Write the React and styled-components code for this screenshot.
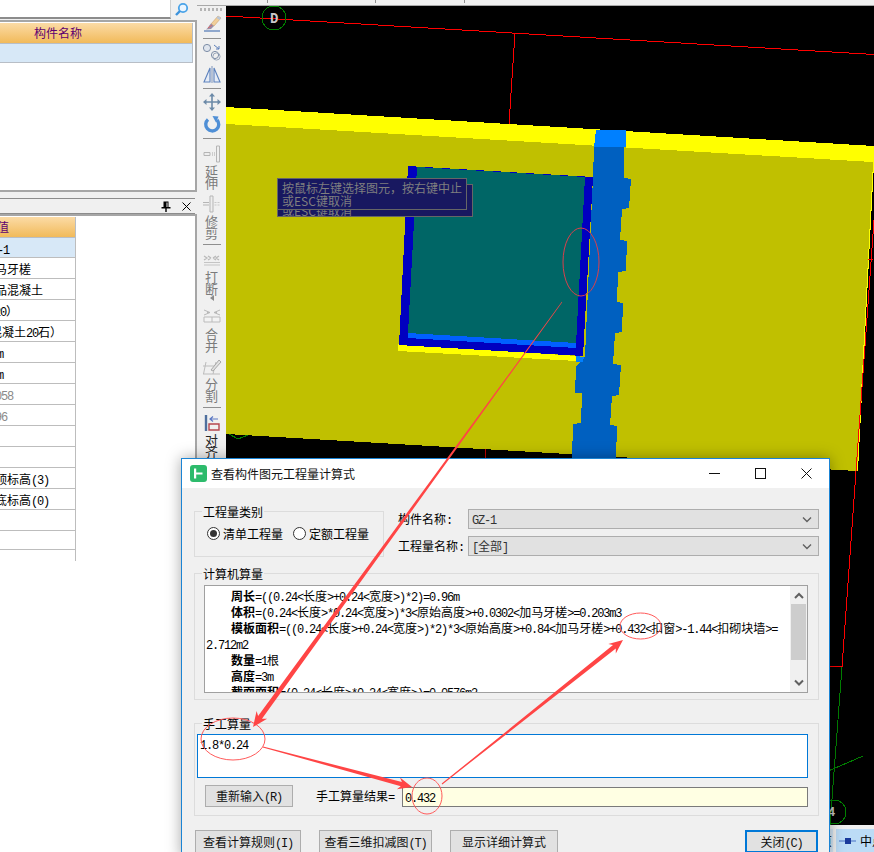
import React from "react";
import styled, { createGlobalStyle } from "styled-components";

const GlobalStyle = createGlobalStyle`
  html, body { margin: 0; padding: 0; background: #f0f0f0; overflow: hidden; }
  * { box-sizing: border-box; }
`;

const Page = styled.div`
  position: relative;
  width: 874px;
  height: 852px;
  overflow: hidden;
  display: flex;
  font-family: "Noto Sans CJK SC", "Liberation Sans", sans-serif;
  font-size: 12px;
  color: #000;
`;

const Lat = styled.span`
  font-family: "Liberation Mono", monospace;
  font-size: 12px;
  letter-spacing: -1.2px;
  white-space: pre;
`;

// SimSun style text: ascii is half the width of a CJK glyph
const Mixed = ({ children }) =>
  String(children)
    .split(/([\x20-\x7e]+)/)
    .map((part, i) => (i % 2 ? <Lat key={i}>{part}</Lat> : part));

/* left side panels */
const LeftPanel = styled.aside`
  width: 197px;
  flex: none;
  display: flex;
  flex-direction: column;
  background: #f0f0f0;
`;

const SearchBar = styled.div`
  height: 20px;
  flex: none;
  display: flex;
`;

const SearchInput = styled.div`
  width: 171px;
  height: 19px;
  background: #fff;
  border-bottom: 2px solid #8c8c8c;
  border-right: 1px solid #d0d0d0;
`;

const SearchButton = styled.div`
  width: 20px;
  height: 19px;
  display: flex;
  align-items: center;
  justify-content: center;
`;

const TreePanel = styled.div`
  height: 172px;
  flex: none;
  padding-top: 1px;
  background: #fff;
  border-top: 2px solid #a6a6a6;
  border-right: 2px solid #a6a6a6;
  border-bottom: 2px solid #a6a6a6;
`;

const HeaderCell = styled.div`
  height: 21px;
  width: ${(p) => p.$width}px;
  padding-left: ${(p) => p.$pad || 0}px;
  line-height: 20px;
  color: #5e0070;
  white-space: nowrap;
  overflow: hidden;
  background: linear-gradient(#fbdba6, #f1ba5a);
  border-right: 1px solid #b8bec6;
  border-bottom: 1px solid #b8bec6;
`;

const SelectedCell = styled.div`
  height: 19px;
  width: 193px;
  background: #d7e8f7;
  border-right: 1px solid #b8bec6;
  border-bottom: 1px solid #b8bec6;
`;

const PanelTitle = styled.div`
  height: 16px;
  width: 195px;
  flex: none;
  margin-top: 6px;
  display: flex;
  align-items: center;
  justify-content: flex-end;
  gap: 11px;
  padding-right: 4px;
  border-top: 1px solid #8c8c8c;
  border-bottom: 1px solid #8c8c8c;
`;

const PropPanel = styled.div`
  flex: 1;
  margin-top: 0;
  padding-top: 1px;
  background: #fff;
  border-top: 2px solid #a6a6a6;
  border-right: 2px solid #a6a6a6;
`;

const PropRow = styled.div`
  height: ${(p) => p.$height || 21}px;
  width: 76px;
  line-height: 21px;
  overflow: hidden;
  white-space: nowrap;
  color: ${(p) => (p.$muted ? "#8a8a8a" : "#000")};
  background: ${(p) => (p.$selected ? "#d7e8f7" : "#fff")};
  border-right: 1px solid #bdbdbd;
  border-bottom: ${(p) => (p.$open ? "none" : "1px solid #bdbdbd")};
`;

const Shifted = styled.span`
  display: inline-block;
  margin-left: ${(p) => p.$shift}px;
`;

/* right side: toolbar and drawing */
const RightArea = styled.div`
  flex: 1;
  display: flex;
  flex-direction: column;
  min-width: 0;
`;

const Ruler = styled.div`
  height: 6px;
  flex: none;
  display: flex;
  background: #f0f0f0;
  border-bottom: 1px solid #a8a8a8;
`;

const RulerTick = styled.i`
  width: 1px;
  height: 3px;
  margin-left: ${(p) => p.$left}px;
  background: #909090;
`;

const Main = styled.div`
  flex: 1;
  display: flex;
  min-height: 0;
`;

const Toolbar = styled.div`
  width: 29px;
  flex: none;
  display: flex;
  flex-direction: column;
  align-items: center;
  background: #f0f0f0;
`;

const Grip = styled.div`
  width: 24px;
  height: 3px;
  margin-top: 2px;
  background: repeating-linear-gradient(90deg, #b4b4b4 0 2px, transparent 2px 4px);
`;

const ToolSep = styled.div`
  width: 18px;
  height: 1px;
  flex: none;
  margin-top: ${(p) => p.$top}px;
  background: #8f8f8f;
`;

const ToolSlot = styled.div`
  height: 22px;
  width: 22px;
  flex: none;
  margin-top: ${(p) => p.$top || 0}px;
  display: flex;
  align-items: center;
  justify-content: center;
`;

const ToolLabel = styled.div`
  width: 14px;
  margin-top: ${(p) => p.$top || 0}px;
  font-size: 13px;
  line-height: 11.5px;
  text-align: center;
  color: ${(p) => (p.$on ? "#222" : "#7b7b7b")};
`;

const DropMark = styled.div`
  width: 0;
  height: 0;
  margin-top: 1px;
  border-top: 3px solid transparent;
  border-bottom: 3px solid transparent;
  border-right: 4px solid #8a8a8a;
`;

const CanvasColumn = styled.div`
  flex: 1;
  display: flex;
  flex-direction: column;
  min-width: 0;
  background: #000;
`;

const Drawing = styled.svg`
  display: block;
  flex: none;
  width: 648px;
  height: 819px;
  background: #000;
`;

const StatusBar = styled.div`
  flex: 1;
  display: flex;
  justify-content: flex-end;
  gap: 3px;
  padding-top: 4px;
  overflow: hidden;
  background: #f0f0f0;
`;

const StatusTab = styled.div`
  width: ${(p) => p.$width}px;
  height: 23px;
  line-height: 23px;
  white-space: nowrap;
  overflow: hidden;
  display: flex;
  align-items: center;
  gap: 4px;
  padding-left: ${(p) => p.$pad || 0}px;
  background: ${(p) => (p.$active ? "#bcdcf6" : "#d4e6f5")};
`;

/* tooltip on the drawing */
const Tooltip = styled.div`
  position: absolute;
  left: ${(p) => p.$left}px;
  top: ${(p) => p.$top}px;
  width: ${(p) => p.$width}px;
  height: ${(p) => p.$height}px;
  overflow: hidden;
  padding: ${(p) => p.$pad}px 0 0 4px;
  line-height: 13px;
  color: #7f7f7f;
  background: #181860;
  border: 1px solid #666;
`;

/* dialog */
const Dialog = styled.div`
  position: absolute;
  left: 181px;
  top: 458px;
  width: 649px;
  height: 400px;
  display: flex;
  flex-direction: column;
  background: #f0f0f0;
  border: 1px solid #1b84d4;
  box-shadow: 0 0 14px rgba(0, 0, 0, 0.35);
`;

const TitleBar = styled.div`
  height: 29px;
  flex: none;
  display: flex;
  align-items: center;
  padding-left: 8px;
  background: #fff;
`;

const TitleText = styled.div`
  margin-left: 4px;
  flex: 1;
  font-size: 12px;
  color: #111;
`;

const WindowButton = styled.div`
  width: 46px;
  height: 29px;
  display: flex;
  align-items: center;
  justify-content: center;
`;

const DialogBody = styled.div`
  flex: 1;
  display: flex;
  flex-direction: column;
  padding: 23px 10px 0 12px;
`;

const TopRow = styled.div`
  height: 47px;
  display: flex;
`;

const Group = styled.div`
  position: relative;
  width: ${(p) => p.$width || 625}px;
  height: ${(p) => p.$height}px;
  margin-top: ${(p) => p.$top || 0}px;
  border: 1px solid #dcdcdc;
`;

const GroupLabel = styled.div`
  position: absolute;
  left: 7px;
  top: -7px;
  padding: 0 1px;
  line-height: 13px;
  background: #f0f0f0;
`;

const RadioRow = styled.div`
  display: flex;
  align-items: center;
  height: 100%;
  padding: 0 0 1px 12px;
  gap: 10px;
`;

const RadioItem = styled.label`
  display: flex;
  align-items: center;
  gap: 3px;
`;

const RadioMark = styled.span`
  width: 13px;
  height: 13px;
  border-radius: 50%;
  border: 1px solid #333;
  background: #fff;
  display: flex;
  align-items: center;
  justify-content: center;
  &::after {
    content: "";
    width: 7px;
    height: 7px;
    border-radius: 50%;
    background: ${(p) => (p.$on ? "#333" : "transparent")};
  }
`;

const FieldColumn = styled.div`
  margin-left: 14px;
  margin-top: -2px;
  flex: 1;
  display: flex;
  flex-direction: column;
  gap: 7px;
`;

const Field = styled.div`
  display: flex;
  align-items: center;
  height: 20px;
`;

const FieldLabel = styled.div`
  width: 70px;
  flex: none;
`;

const Select = styled.div`
  flex: 1;
  height: 20px;
  display: flex;
  align-items: center;
  justify-content: space-between;
  padding: 0 6px 0 3px;
  background: #e1e1e1;
  border: 1px solid #adadad;
  color: #333;
`;

const FormulaBox = styled.div`
  position: absolute;
  left: 9px;
  top: 11px;
  width: 604px;
  height: 108px;
  background: #fff;
  border: 1px solid #a0a0a0;
  overflow: hidden;
  padding-top: 2px;
`;

const FormulaLine = styled.div`
  height: 16px;
  line-height: 16px;
  white-space: pre;
  padding-left: ${(p) => (p.$wrapped ? 1 : 26)}px;
`;

const FormulaKey = styled.b`
  font-weight: 700;
`;

const ScrollTrack = styled.div`
  position: absolute;
  top: 0;
  right: 0;
  width: 17px;
  height: 106px;
  display: flex;
  flex-direction: column;
  align-items: center;
  justify-content: space-between;
  padding: 6px 0;
  background: #f0f0f0;
`;

const ScrollThumb = styled.div`
  position: absolute;
  left: 1px;
  top: 18px;
  width: 15px;
  height: 56px;
  background: #cdcdcd;
`;

const ManualInput = styled.div`
  position: absolute;
  left: 2px;
  top: 10px;
  width: 611px;
  height: 44px;
  padding: 2px 2px;
  line-height: 14px;
  background: #fff;
  border: 1px solid #0078d7;
`;

const ManualRow = styled.div`
  position: absolute;
  left: 10px;
  top: 61px;
  right: 10px;
  height: 22px;
  display: flex;
  align-items: center;
`;

const Button = styled.button`
  width: ${(p) => p.$width}px;
  height: ${(p) => p.$height || 23}px;
  flex: none;
  margin: 0;
  padding: 0;
  font: inherit;
  color: #111;
  background: #e1e1e1;
  border: ${(p) => (p.$primary ? "2px solid #0078d7" : "1px solid #adadad")};
`;

const ResultLabel = styled.div`
  margin-left: 23px;
  width: 86px;
  flex: none;
`;

const ResultValue = styled.div`
  flex: 1;
  height: 20px;
  margin-top: 2px;
  line-height: 18px;
  padding-left: 2px;
  background: #ffffe3;
  border: 1px solid #7a7a7a;
`;

const BottomRow = styled.div`
  display: flex;
  gap: 18px;
  margin-top: 14px;
  margin-left: 1px;
  padding-right: 1px;
`;

const Spacer = styled.div`
  flex: 1;
`;

const Annotations = styled.svg`
  position: absolute;
  left: 0;
  top: 0;
  width: 874px;
  height: 852px;
  pointer-events: none;
`;

/* tapered hand drawn arrow, as it is in the picture */
const arrowPoints = (x1, y1, x2, y2, w0, w1, headLen, headHalf) => {
  const len = Math.hypot(x2 - x1, y2 - y1);
  const dx = (x2 - x1) / len;
  const dy = (y2 - y1) / len;
  const nx = -dy;
  const ny = dx;
  const bx = x2 - dx * headLen;
  const by = y2 - dy * headLen;
  const neckX = x2 - dx * (headLen - 3);
  const neckY = y2 - dy * (headLen - 3);
  return [
    [x1 + nx * w0, y1 + ny * w0],
    [neckX + nx * w1, neckY + ny * w1],
    [bx + nx * headHalf, by + ny * headHalf],
    [x2, y2],
    [bx - nx * headHalf, by - ny * headHalf],
    [neckX - nx * w1, neckY - ny * w1],
    [x1 - nx * w0, y1 - ny * w0],
  ]
    .map((p) => p.map((v) => v.toFixed(1)).join(","))
    .join(" ");
};

const Chevron = ({ up, size = 10, color = "#606060", width = 1.4 }) => (
  <svg width={size} height={size * 0.7} viewBox="0 0 10 7">
    <path
      d={up ? "M1 6 L5 2 L9 6" : "M1 1.5 L5 5.5 L9 1.5"}
      fill="none"
      stroke={color}
      strokeWidth={width}
    />
  </svg>
);

const icons = {
  brush: (
    <svg width="20" height="20" viewBox="0 0 20 20">
      <path d="M9 11 L16 3 L19 5 L12 13 Z" fill="#f1cf9a" stroke="#c9a06a" strokeWidth=".6" />
      <path d="M16 3 L19 5 L17.5 7 L14.5 5 Z" fill="#b9c6d8" />
      <path d="M9 10.5 L12 13 L9 16 L4 16.5 C6 15 7 12.5 9 10.5 Z" fill="#9a90a8" />
      <path d="M6 15 L10 12" stroke="#d66" strokeWidth="1" />
      <path d="M2 18 H18" stroke="#4f77b4" strokeWidth="1.2" />
    </svg>
  ),
  circles: (
    <svg width="20" height="20" viewBox="0 0 20 20">
      <circle cx="5" cy="6" r="3.6" fill="#dfe5ee" stroke="#7d8da6" />
      <circle cx="13" cy="13" r="3.6" fill="none" stroke="#7d8da6" />
      <circle cx="14.5" cy="14.5" r="3.6" fill="none" stroke="#9aa7ba" />
      <path d="M12 3 L17 7 M17 4 V7 H14" fill="none" stroke="#5c7fb8" strokeWidth="1" />
    </svg>
  ),
  mirror: (
    <svg width="20" height="20" viewBox="0 0 20 20">
      <path d="M8 3 V17 H2 Z M12 3 V17 H18 Z" fill="#e6ecf6" stroke="#5d82bd" strokeWidth="1.1" />
      <path d="M10 1 V18" stroke="#7c93ba" strokeWidth="1" />
    </svg>
  ),
  move: (
    <svg width="20" height="20" viewBox="0 0 20 20" fill="#6c8aa8">
      <path d="M9.2 4 H10.8 V9.2 H16 V10.8 H10.8 V16 H9.2 V10.8 H4 V9.2 H9.2 Z" />
      <path d="M10 1 L13 4.5 H7 Z M10 19 L7 15.5 H13 Z M1 10 L4.5 7 V13 Z M19 10 L15.5 13 V7 Z" />
    </svg>
  ),
  rotate: (
    <svg width="20" height="20" viewBox="0 0 20 20">
      <path d="M6 5.5 A6.5 6.5 0 1 0 15 6" fill="none" stroke="#4f8fd6" strokeWidth="3.4" />
      <path d="M10.5 2 L16.5 2.5 L14 8.5 Z" fill="#4f8fd6" />
    </svg>
  ),
  extend: (
    <svg width="20" height="18" viewBox="0 0 20 18">
      <path d="M14.5 1 H17.5 V17 H14.5 Z" fill="#eee" stroke="#b5b5b5" />
      <path d="M2 7.5 H8 V10.5 H2 Z" fill="#eee" stroke="#b5b5b5" />
      <path d="M10 8 H13 M10 10 H13" stroke="#a8a8a8" strokeDasharray="1 1" />
    </svg>
  ),
  trim: (
    <svg width="20" height="18" viewBox="0 0 20 18">
      <path d="M8 1 H11 V17 H8 Z" fill="#eee" stroke="#b5b5b5" />
      <path d="M1 7.5 H7 M1 10 H7" stroke="#b5b5b5" />
      <path d="M12.5 7.5 H18 M12.5 10 H18" stroke="#c8c8c8" strokeDasharray="2 1" />
    </svg>
  ),
  split: (
    <svg width="20" height="14" viewBox="0 0 20 14">
      <path d="M2 4 L5 6 L2 8 M9 6 L6 4 M9 6 L6 8" fill="none" stroke="#b8b8b8" strokeWidth="1.2" />
      <path d="M17 4 L14 6 L17 8 M11 6 L14 4 M11 6 L14 8" fill="none" stroke="#b8b8b8" strokeWidth="1.2" />
      <path d="M2 10.5 H18 M2 13 H18" stroke="#c4c4c4" />
    </svg>
  ),
  merge: (
    <svg width="20" height="14" viewBox="0 0 20 14">
      <path d="M2 1 L8 3.5 L2 6 M5 3.5 H8 M18 1 L12 3.5 L18 6 M12 3.5 H15" fill="none" stroke="#b8b8b8" />
      <path d="M2 8 H18 V13 H2 Z M10 8 V13" fill="#f3f3f3" stroke="#bbb" />
    </svg>
  ),
  cut: (
    <svg width="20" height="18" viewBox="0 0 20 18">
      <path d="M1 8 H15 M1 16 H18 M4 4 L1.5 16 M14 4 L11 16" fill="none" stroke="#bcbcbc" />
      <path d="M9 12 L17 2 L19 4 L11 13 Z" fill="#e2e2e2" stroke="#a8a8a8" />
    </svg>
  ),
  align: (
    <svg width="20" height="18" viewBox="0 0 20 18">
      <path d="M4 1 V17" stroke="#4f6f9d" strokeWidth="2.4" />
      <path d="M7 10 H17 V16 H7 Z" fill="none" stroke="#b5474f" strokeWidth="1.4" />
      <path d="M16 5 H8 M11 2.5 L8 5 L11 7.5" fill="none" stroke="#5c78c4" strokeWidth="1.2" />
    </svg>
  ),
};

const Tool = ({ icon, label, top, labelTop, on }) => (
  <>
    <ToolSlot $top={top}>{icons[icon]}</ToolSlot>
    {label && (
      <ToolLabel $top={labelTop} $on={on}>
        {label}
      </ToolLabel>
    )}
  </>
);

const propRows = [
  { text: "GZ-1", shift: -15, selected: true, height: 20 },
  { text: "加马牙槎", shift: -17 },
  { text: "商品混凝土", shift: -17 },
  { text: "（C20）", shift: -24 },
  { text: "（混凝土20石）", shift: -22 },
  { text: "240mm", shift: -27 },
  { text: "240mm", shift: -27 },
  { text: "0.058", shift: -17, muted: true },
  { text: "0.96", shift: -17, muted: true },
  {},
  {},
  { text: "层顶标高(3)", shift: -17 },
  { text: "层底标高(0)", shift: -17 },
  {},
  { height: 19 },
  { height: 11, open: true },
];

const formula = [
  ["周长", "=((0.24<长度>+0.24<宽度>)*2)=0.96m"],
  ["体积", "=(0.24<长度>*0.24<宽度>)*3<原始高度>+0.0302<加马牙槎>=0.203m3"],
  ["模板面积", "=((0.24<长度>+0.24<宽度>)*2)*3<原始高度>+0.84<加马牙槎>+0.432<扣窗>-1.44<扣砌块墙>="],
  [null, "2.712m2"],
  ["数量", "=1根"],
  ["高度", "=3m"],
  ["截面面积", "=(0.24<长度>*0.24<宽度>)=0.0576m2"],
];

const App = () => {
  return (
    <Page>
      <GlobalStyle />
      <LeftPanel>
        <SearchBar>
          <SearchInput />
          <SearchButton>
            <svg width="15" height="15" viewBox="0 0 15 15">
              <circle cx="9" cy="6" r="4.2" fill="#eaf5ff" stroke="#4aa3e8" strokeWidth="1.8" />
              <path d="M6 9 L2 13" stroke="#3d93dc" strokeWidth="2.4" />
            </svg>
          </SearchButton>
        </SearchBar>
        <TreePanel>
          <HeaderCell $width={193} $pad={34}>
            构件名称
          </HeaderCell>
          <SelectedCell />
        </TreePanel>
        <PanelTitle>
          <svg width="10" height="11" viewBox="0 0 10 11">
            <path d="M2.5 0.5 H7.5 V6 H9.5 V7.5 H5.7 V11 H4.3 V7.5 H0.5 V6 H2.5 Z M5.5 1.5 V6 H6.5 V1.5 Z" fill="#000" />
          </svg>
          <svg width="9" height="9" viewBox="0 0 9 9">
            <path d="M.5 .5 L8.5 8.5 M8.5 .5 L.5 8.5" stroke="#000" strokeWidth="1" />
          </svg>
        </PanelTitle>
        <PropPanel>
          <HeaderCell $width={76}>
            <Shifted $shift={-27}>属性值</Shifted>
          </HeaderCell>
          {propRows.map((row, i) => (
            <PropRow key={i} $selected={row.selected} $muted={row.muted} $height={row.height} $open={row.open}>
              {row.text && (
                <Shifted $shift={row.shift}>
                  <Mixed>{row.text}</Mixed>
                </Shifted>
              )}
            </PropRow>
          ))}
        </PropPanel>
      </LeftPanel>

      <RightArea>
        <Ruler>
          <RulerTick $left={70} />
          <RulerTick $left={107} />
          <RulerTick $left={88} />
        </Ruler>
        <Main>
          <Toolbar>
            <Grip />
            <Tool icon="brush" top={1} />
            <ToolSep $top={4} />
            <Tool icon="circles" top={2} />
            <Tool icon="mirror" top={1} />
            <ToolSep $top={2} />
            <Tool icon="move" top={2} />
            <Tool icon="rotate" />
            <ToolSep $top={3} />
            <Tool icon="extend" top={4} label="延伸" />
            <Tool icon="trim" top={5} label="修剪" />
            <ToolSep $top={6} />
            <Tool icon="split" top={3} label="打断" labelTop={1} />
            <DropMark />
            <Tool icon="merge" top={4} label="合并" labelTop={1} />
            <Tool icon="cut" top={5} label="分割" />
            <ToolSep $top={6} />
            <Tool icon="align" top={4} label="对齐" on />
          </Toolbar>
          <CanvasColumn>
            <Drawing viewBox="226 6 648 819" shapeRendering="crispEdges">
              <line x1="226" y1="16" x2="874" y2="54.5" stroke="#f00" />
              <line x1="515" y1="33" x2="509" y2="124" stroke="#f00" />
              <polygon points="226,107 874,146 874,163 858,471 857,471 873,162 226,124" fill="#ff0" />
              <polygon points="226,124 873,162 857,471 226,434" fill="#c0c000" />
              <polyline points="229,434 238,439 248,435" fill="none" stroke="#008000" />
              <line x1="485" y1="449" x2="485" y2="458" stroke="#c00000" />
              <line x1="874" y1="220" x2="842" y2="667" stroke="#f00" />
              <line x1="868" y1="259" x2="873" y2="259" stroke="#f00" />
              <line x1="826" y1="666" x2="842" y2="666" stroke="#f00" />
              <line x1="842" y1="667" x2="830" y2="825" stroke="#008000" />
              <line x1="826" y1="772" x2="863" y2="756" stroke="#008000" />
              <circle cx="834" cy="812" r="12" fill="none" stroke="#008000" />
              <text x="828" y="816" fontFamily="Liberation Mono" fontSize="12" fontWeight="700" fill="#c8c8c8">
                4
              </text>
              <circle cx="274" cy="18" r="12" fill="none" stroke="#008000" />
              <text x="270" y="23" fontFamily="Liberation Mono" fontSize="14" fontWeight="700" fill="#c8c8c8">
                D
              </text>

              {/* the column */}
              <polygon points="596,130 626,130 626,147 594,147" fill="#0080ff" />
              <polygon
                points="594,147 624,147 624,178 631,179 629,208 622,209 620,240 627,241 626,271 618,272 617,302 623,303 622,332 615,333 613,364 621,365 619,395 612,396 610,425 617,426 616,458 572,458 573,424 581,423 582,393 575,393 576,367 585,356 593,177"
                fill="#0060c0"
              />
              {/* wall opening */}
              <polygon points="398,344 577,356 577,361 398,351" fill="#ff0" />
              <polygon points="408,166 593,177 583,356 399,345" fill="#0000c0" />
              <polygon points="417,167 585,177 576,344 408,333" fill="#006666" />
              <polygon points="408,333 576,343 576,348 408,338" fill="#0060ff" />
              <polygon points="576,356 584,357 583,362 576,362" fill="#0080ff" />
            </Drawing>
            <StatusBar>
              <StatusTab $width={6}>
                <Shifted $shift={-7}>页</Shifted>
              </StatusTab>
              <StatusTab $width={38} $active $pad={3}>
                <svg width="17" height="8" viewBox="0 0 17 8" style={{ flex: "none" }}>
                  <path d="M0 4 H17" stroke="#6f95d6" strokeWidth="1.5" />
                  <rect x="6" y="1" width="6" height="6" fill="#1a3a9c" />
                </svg>
                中点
              </StatusTab>
            </StatusBar>
          </CanvasColumn>
        </Main>
      </RightArea>

      <Tooltip $left={277} $top={184} $width={196} $height={33} $pad={19}>
        或ESC键取消
      </Tooltip>
      <Tooltip $left={277} $top={178} $width={190} $height={32} $pad={2}>
        按鼠标左键选择图元，按右键中止
        <br />
        或ESC键取消
      </Tooltip>

      <Dialog>
        <TitleBar>
          <svg width="17" height="17" viewBox="0 0 17 17">
            <rect width="17" height="17" rx="3" fill="#2dbb6c" />
            <path d="M4 3.5 H6.2 V7.5 H12.5 V9.5 H6.2 V13.5 H4 Z" fill="#fff" />
          </svg>
          <TitleText>查看构件图元工程量计算式</TitleText>
          <WindowButton>
            <svg width="11" height="11" viewBox="0 0 11 11">
              <path d="M0 5.5 H11" stroke="#111" />
            </svg>
          </WindowButton>
          <WindowButton>
            <svg width="11" height="11" viewBox="0 0 11 11">
              <rect x=".5" y=".5" width="10" height="10" fill="none" stroke="#111" />
            </svg>
          </WindowButton>
          <WindowButton>
            <svg width="11" height="11" viewBox="0 0 11 11">
              <path d="M.5 .5 L10.5 10.5 M10.5 .5 L.5 10.5" stroke="#111" />
            </svg>
          </WindowButton>
        </TitleBar>
        <DialogBody>
          <TopRow>
            <Group $width={190} $height={46}>
              <GroupLabel>工程量类别</GroupLabel>
              <RadioRow>
                <RadioItem>
                  <RadioMark $on />
                  清单工程量
                </RadioItem>
                <RadioItem>
                  <RadioMark />
                  定额工程量
                </RadioItem>
              </RadioRow>
            </Group>
            <FieldColumn>
              <Field>
                <FieldLabel>
                  <Mixed>构件名称:</Mixed>
                </FieldLabel>
                <Select>
                  <span>
                    <Mixed>GZ-1</Mixed>
                  </span>
                  <Chevron />
                </Select>
              </Field>
              <Field>
                <FieldLabel>
                  <Mixed>工程量名称:</Mixed>
                </FieldLabel>
                <Select>
                  <span>
                    <Mixed>[全部]</Mixed>
                  </span>
                  <Chevron />
                </Select>
              </Field>
            </FieldColumn>
          </TopRow>

          <Group $height={127} $top={15}>
            <GroupLabel>计算机算量</GroupLabel>
            <FormulaBox>
              {formula.map(([key, rest], i) => (
                <FormulaLine key={i} $wrapped={!key}>
                  {key && <FormulaKey>{key}</FormulaKey>}
                  <Mixed>{rest}</Mixed>
                </FormulaLine>
              ))}
              <ScrollTrack>
                <Chevron up width={2} />
                <ScrollThumb />
                <Chevron width={2} />
              </ScrollTrack>
            </FormulaBox>
          </Group>

          <Group $height={93} $top={23}>
            <GroupLabel>手工算量</GroupLabel>
            <ManualInput>
              <Mixed>1.8*0.24</Mixed>
            </ManualInput>
            <ManualRow>
              <Button $width={88} $height={22}>
                <Mixed>重新输入(R)</Mixed>
              </Button>
              <ResultLabel>
                <Mixed>手工算量结果=</Mixed>
              </ResultLabel>
              <ResultValue>
                <Mixed>0.432</Mixed>
              </ResultValue>
            </ManualRow>
          </Group>

          <BottomRow>
            <Button $width={106}>
              <Mixed>查看计算规则(I)</Mixed>
            </Button>
            <Button $width={113}>
              <Mixed>查看三维扣减图(T)</Mixed>
            </Button>
            <Button $width={108}>显示详细计算式</Button>
            <Spacer />
            <Button $width={73} $primary>
              <Mixed>关闭(C)</Mixed>
            </Button>
          </BottomRow>
        </DialogBody>
      </Dialog>

      <Annotations viewBox="0 0 874 852">
        <g fill="none" strokeWidth="1">
          <ellipse cx="581" cy="262" rx="18" ry="34" stroke="#d8404c" />
          <ellipse cx="233" cy="739" rx="32" ry="21" stroke="#ff5a5a" />
          <ellipse cx="427" cy="796" rx="15" ry="18" stroke="#ff5a5a" />
          <ellipse cx="640.5" cy="626" rx="20.5" ry="13" stroke="#ff5a5a" />
        </g>
        <g fill="#ff4545">
          <polygon points={arrowPoints(562, 302, 253, 727, 0.3, 2.4, 15, 6.5)} />
          <polygon points={arrowPoints(263, 747, 412, 787, 0.4, 2.2, 14, 6)} />
          <polygon points={arrowPoints(442, 784, 623, 640, 0.5, 2.2, 14, 6)} />
        </g>
      </Annotations>
    </Page>
  );
};

export default App;
